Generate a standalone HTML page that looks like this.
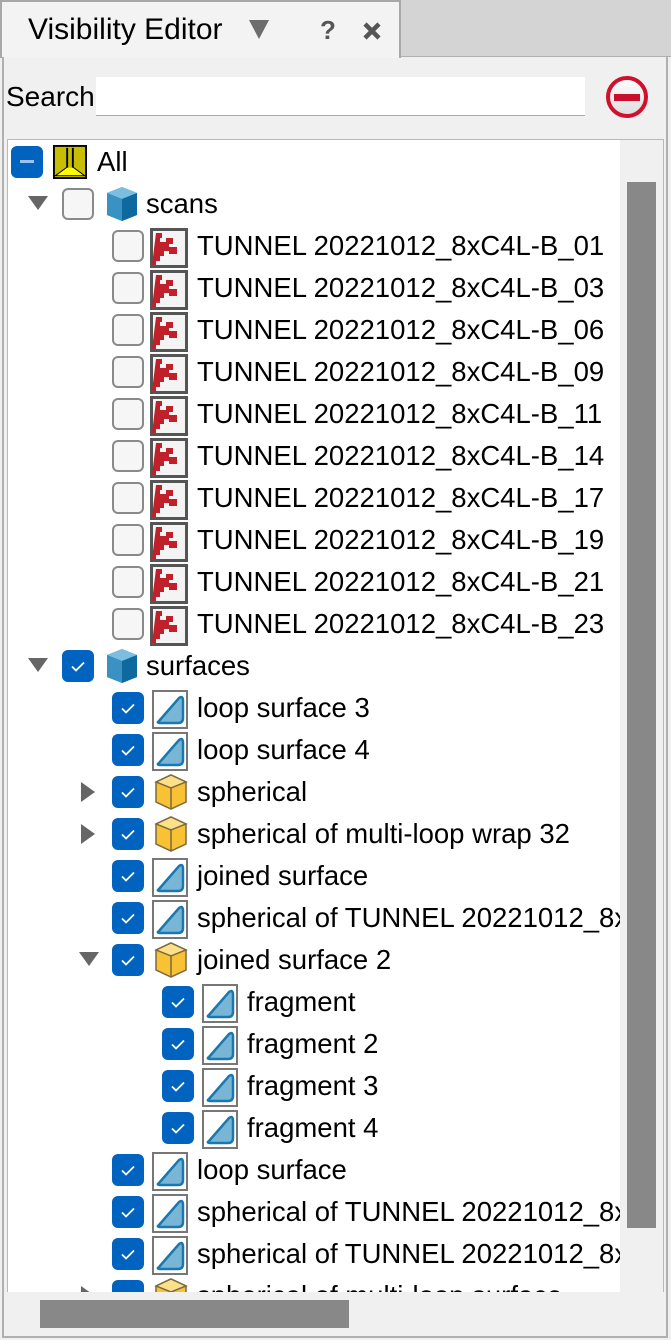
<!DOCTYPE html>
<html><head><meta charset="utf-8"><style>
*{margin:0;padding:0;box-sizing:border-box}
body{width:671px;height:1340px;background:#f0f0f0;position:relative;overflow:hidden;font-family:"Segoe UI","Liberation Sans","DejaVu Sans",sans-serif;color:#000}
.a{position:absolute}
.r{position:absolute;left:0;height:42px;width:620px}
.cb{position:absolute;top:5px;width:32px;height:32px;border-radius:6px;background:#0063bf}
.cb.u{background:#f6f6f6;border:2px solid #8a8a8a}
.cb svg{position:absolute;left:0;top:0}
.t{position:absolute;top:0;line-height:42px;font-size:27.5px;white-space:nowrap}
.ic{position:absolute;top:3px}
.ar{position:absolute;top:13px}
</style></head><body>
<div class="a" style="left:400px;top:0;width:271px;height:57px;background:#d4d4d4;border-bottom:1px solid #b0b0b0"></div>
<div class="a" style="left:0;top:0;width:401px;height:58px;background:#f3f3f3;border:2px solid #a8a8a8;border-bottom:none"></div>
<div class="a" style="left:28px;top:12px;font-size:30px;line-height:36px">Visibility Editor</div>
<svg class="a" style="left:247px;top:17px" width="24" height="24"><polygon points="2,3 22,3 12,22" fill="#6d6d6d"/></svg>
<div class="a" style="left:320px;top:12px;font-size:26px;font-weight:bold;color:#555;line-height:36px">?</div>
<svg class="a" style="left:361px;top:20px" width="22" height="22"><path d="M4 4L18 18M18 4L4 18" stroke="#555" stroke-width="4.5"/></svg>
<div class="a" style="left:2px;top:57px;width:666px;height:1281px;border:2px solid #b0b0b0;border-top:none"></div>
<div class="a" style="left:6px;top:79px;font-size:28px;line-height:36px">Search</div>
<div class="a" style="left:96px;top:77px;width:489px;height:39px;background:#fff;border-bottom:1px solid #aaa"></div>
<svg class="a" style="left:604px;top:74px" width="46" height="46"><defs><linearGradient id="g" x1="0" y1="0" x2="0" y2="1"><stop offset="0" stop-color="#fff"/><stop offset="1" stop-color="#ddd"/></linearGradient></defs><circle cx="23" cy="23" r="19" fill="url(#g)" stroke="#d0102c" stroke-width="4"/><rect x="10" y="20" width="26" height="7" fill="#c8102e"/></svg>
<div class="a" style="left:7px;top:139px;width:657px;height:1154px;background:#fff;border:1px solid #b8b8b8;overflow:hidden">
<div class="a" style="left:-7px;top:0;width:620px;height:1153px;overflow:hidden">
<svg width="0" height="0" style="position:absolute"><defs>
<symbol id="chk" viewBox="0 0 32 32"><path d="M10 16.5l4 4 8-8" fill="none" stroke="#fff" stroke-width="1.8"/></symbol>
<symbol id="cube" viewBox="0 0 40 40"><polygon points="20,3 35,9 35,31 20,37 5,31 5,9" fill="#2f7fb0"/><polygon points="20,3 35,9 20,15 5,9" fill="#7cbedf"/><polygon points="5,9 20,15 20,37 5,31" fill="#3a92c4"/><polygon points="20,15 35,9 35,31 20,37" fill="#0e6a9e"/></symbol>
<symbol id="ycube" viewBox="0 0 40 40"><polygon points="20,3 35,10 35,30 20,37 5,30 5,10" fill="#f9c234" stroke="#7a6a40" stroke-width="1.5"/><polygon points="5,10 20,3 35,10 20,16" fill="#ffe08a" stroke="#7a6a40" stroke-width="1.5"/><line x1="20" y1="16" x2="20" y2="37" stroke="#7a6a40" stroke-width="1.5"/></symbol>
<symbol id="scan" viewBox="0 0 38 40"><rect x="1.5" y="1.5" width="35" height="37" fill="#f4f4f4" stroke="#555" stroke-width="3"/><path d="M6 5h6v5h-2v4h6v-4h7v6h-4v3h8v7h-8v-3h-5v5h-4v5h-4v4h-4z" fill="#c0202a"/></symbol>
<symbol id="surf" viewBox="0 0 36 40"><rect x="1" y="1" width="34" height="37" fill="#fff" stroke="#777" stroke-width="2"/><path d="M7 31L27 8Q31 5 31 11V28Q31 33 26 33H9Q4 33 7 31Z" fill="#79b6d6" stroke="#1a78b0" stroke-width="2.5"/></symbol>
<symbol id="all" viewBox="0 0 36 36"><rect x="1" y="1" width="34" height="34" fill="#c8be00" stroke="#000" stroke-width="2"/><path d="M15 3V24L4 32H32L21 24V3" fill="none" stroke="#000" stroke-width="2"/><path d="M4 32L15 24H21L32 32Z" fill="#ffff00"/></symbol>
</defs></svg>

<div class="r" style="top:1px"><div class="cb" style="left:10px"><div class="a" style="left:9px;top:14px;width:14px;height:3px;background:#9cc4ea"></div></div><svg class="ic" style="left:52px" width="34" height="36"><use href="#all"/></svg><div class="t" style="left:96px">All</div></div>

<div class="r" style="top:43px"><svg class="ar" style="left:27px" width="20" height="16"><polygon points="0,0 20,0 10,14" fill="#666"/></svg><div class="cb u" style="left:61px"></div><svg class="ic" style="left:101px;top:1px" width="40" height="40"><use href="#cube"/></svg><div class="t" style="left:145px">scans</div></div>

<div class="r" style="top:85px"><div class="cb u" style="left:111px"></div><svg class="ic" style="left:149px" width="38" height="40"><use href="#scan"/></svg><div class="t" style="left:196px">TUNNEL 20221012_8xC4L-B_01</div></div>
<div class="r" style="top:127px"><div class="cb u" style="left:111px"></div><svg class="ic" style="left:149px" width="38" height="40"><use href="#scan"/></svg><div class="t" style="left:196px">TUNNEL 20221012_8xC4L-B_03</div></div>
<div class="r" style="top:169px"><div class="cb u" style="left:111px"></div><svg class="ic" style="left:149px" width="38" height="40"><use href="#scan"/></svg><div class="t" style="left:196px">TUNNEL 20221012_8xC4L-B_06</div></div>
<div class="r" style="top:211px"><div class="cb u" style="left:111px"></div><svg class="ic" style="left:149px" width="38" height="40"><use href="#scan"/></svg><div class="t" style="left:196px">TUNNEL 20221012_8xC4L-B_09</div></div>
<div class="r" style="top:253px"><div class="cb u" style="left:111px"></div><svg class="ic" style="left:149px" width="38" height="40"><use href="#scan"/></svg><div class="t" style="left:196px">TUNNEL 20221012_8xC4L-B_11</div></div>
<div class="r" style="top:295px"><div class="cb u" style="left:111px"></div><svg class="ic" style="left:149px" width="38" height="40"><use href="#scan"/></svg><div class="t" style="left:196px">TUNNEL 20221012_8xC4L-B_14</div></div>
<div class="r" style="top:337px"><div class="cb u" style="left:111px"></div><svg class="ic" style="left:149px" width="38" height="40"><use href="#scan"/></svg><div class="t" style="left:196px">TUNNEL 20221012_8xC4L-B_17</div></div>
<div class="r" style="top:379px"><div class="cb u" style="left:111px"></div><svg class="ic" style="left:149px" width="38" height="40"><use href="#scan"/></svg><div class="t" style="left:196px">TUNNEL 20221012_8xC4L-B_19</div></div>
<div class="r" style="top:421px"><div class="cb u" style="left:111px"></div><svg class="ic" style="left:149px" width="38" height="40"><use href="#scan"/></svg><div class="t" style="left:196px">TUNNEL 20221012_8xC4L-B_21</div></div>
<div class="r" style="top:463px"><div class="cb u" style="left:111px"></div><svg class="ic" style="left:149px" width="38" height="40"><use href="#scan"/></svg><div class="t" style="left:196px">TUNNEL 20221012_8xC4L-B_23</div></div>

<div class="r" style="top:505px"><svg class="ar" style="left:27px" width="20" height="16"><polygon points="0,0 20,0 10,14" fill="#666"/></svg><div class="cb" style="left:61px"><svg width="32" height="32"><use href="#chk"/></svg></div><svg class="ic" style="left:101px;top:1px" width="40" height="40"><use href="#cube"/></svg><div class="t" style="left:145px">surfaces</div></div>

<div class="r" style="top:547px"><div class="cb" style="left:111px"><svg width="32" height="32"><use href="#chk"/></svg></div><svg class="ic" style="left:151px" width="36" height="40"><use href="#surf"/></svg><div class="t" style="left:196px">loop surface 3</div></div>
<div class="r" style="top:589px"><div class="cb" style="left:111px"><svg width="32" height="32"><use href="#chk"/></svg></div><svg class="ic" style="left:151px" width="36" height="40"><use href="#surf"/></svg><div class="t" style="left:196px">loop surface 4</div></div>
<div class="r" style="top:631px"><svg class="ar" style="left:80px;top:11px" width="16" height="20"><polygon points="0,0 14,10 0,20" fill="#666"/></svg><div class="cb" style="left:111px"><svg width="32" height="32"><use href="#chk"/></svg></div><svg class="ic" style="left:150px;top:1px" width="40" height="40"><use href="#ycube"/></svg><div class="t" style="left:196px">spherical</div></div>
<div class="r" style="top:673px"><svg class="ar" style="left:80px;top:11px" width="16" height="20"><polygon points="0,0 14,10 0,20" fill="#666"/></svg><div class="cb" style="left:111px"><svg width="32" height="32"><use href="#chk"/></svg></div><svg class="ic" style="left:150px;top:1px" width="40" height="40"><use href="#ycube"/></svg><div class="t" style="left:196px">spherical of multi-loop wrap 32</div></div>
<div class="r" style="top:715px"><div class="cb" style="left:111px"><svg width="32" height="32"><use href="#chk"/></svg></div><svg class="ic" style="left:151px" width="36" height="40"><use href="#surf"/></svg><div class="t" style="left:196px">joined surface</div></div>
<div class="r" style="top:757px"><div class="cb" style="left:111px"><svg width="32" height="32"><use href="#chk"/></svg></div><svg class="ic" style="left:151px" width="36" height="40"><use href="#surf"/></svg><div class="t" style="left:196px">spherical of TUNNEL 20221012_8xC4L</div></div>
<div class="r" style="top:799px"><svg class="ar" style="left:78px" width="20" height="16"><polygon points="0,0 20,0 10,14" fill="#666"/></svg><div class="cb" style="left:111px"><svg width="32" height="32"><use href="#chk"/></svg></div><svg class="ic" style="left:150px;top:1px" width="40" height="40"><use href="#ycube"/></svg><div class="t" style="left:196px">joined surface 2</div></div>
<div class="r" style="top:841px"><div class="cb" style="left:161px"><svg width="32" height="32"><use href="#chk"/></svg></div><svg class="ic" style="left:201px" width="36" height="40"><use href="#surf"/></svg><div class="t" style="left:246px">fragment</div></div>
<div class="r" style="top:883px"><div class="cb" style="left:161px"><svg width="32" height="32"><use href="#chk"/></svg></div><svg class="ic" style="left:201px" width="36" height="40"><use href="#surf"/></svg><div class="t" style="left:246px">fragment 2</div></div>
<div class="r" style="top:925px"><div class="cb" style="left:161px"><svg width="32" height="32"><use href="#chk"/></svg></div><svg class="ic" style="left:201px" width="36" height="40"><use href="#surf"/></svg><div class="t" style="left:246px">fragment 3</div></div>
<div class="r" style="top:967px"><div class="cb" style="left:161px"><svg width="32" height="32"><use href="#chk"/></svg></div><svg class="ic" style="left:201px" width="36" height="40"><use href="#surf"/></svg><div class="t" style="left:246px">fragment 4</div></div>
<div class="r" style="top:1009px"><div class="cb" style="left:111px"><svg width="32" height="32"><use href="#chk"/></svg></div><svg class="ic" style="left:151px" width="36" height="40"><use href="#surf"/></svg><div class="t" style="left:196px">loop surface</div></div>
<div class="r" style="top:1051px"><div class="cb" style="left:111px"><svg width="32" height="32"><use href="#chk"/></svg></div><svg class="ic" style="left:151px" width="36" height="40"><use href="#surf"/></svg><div class="t" style="left:196px">spherical of TUNNEL 20221012_8xC4L</div></div>
<div class="r" style="top:1093px"><div class="cb" style="left:111px"><svg width="32" height="32"><use href="#chk"/></svg></div><svg class="ic" style="left:151px" width="36" height="40"><use href="#surf"/></svg><div class="t" style="left:196px">spherical of TUNNEL 20221012_8xC4L</div></div>
<div class="r" style="top:1135px"><svg class="ar" style="left:80px;top:11px" width="16" height="20"><polygon points="0,0 14,10 0,20" fill="#666"/></svg><div class="cb" style="left:111px"><svg width="32" height="32"><use href="#chk"/></svg></div><svg class="ic" style="left:150px;top:1px" width="40" height="40"><use href="#ycube"/></svg><div class="t" style="left:196px">spherical of multi-loop surface</div></div>
</div>
<div class="a" style="left:612px;top:0;width:44px;height:1153px;background:#f0f0f0"></div>
<div class="a" style="left:619px;top:42px;width:29px;height:1046px;background:#888"></div>
</div>
<div class="a" style="left:7px;top:1292px;width:657px;height:41px;background:#f0f0f0"></div>
<div class="a" style="left:40px;top:1300px;width:309px;height:28px;background:#888"></div>
</body></html>
